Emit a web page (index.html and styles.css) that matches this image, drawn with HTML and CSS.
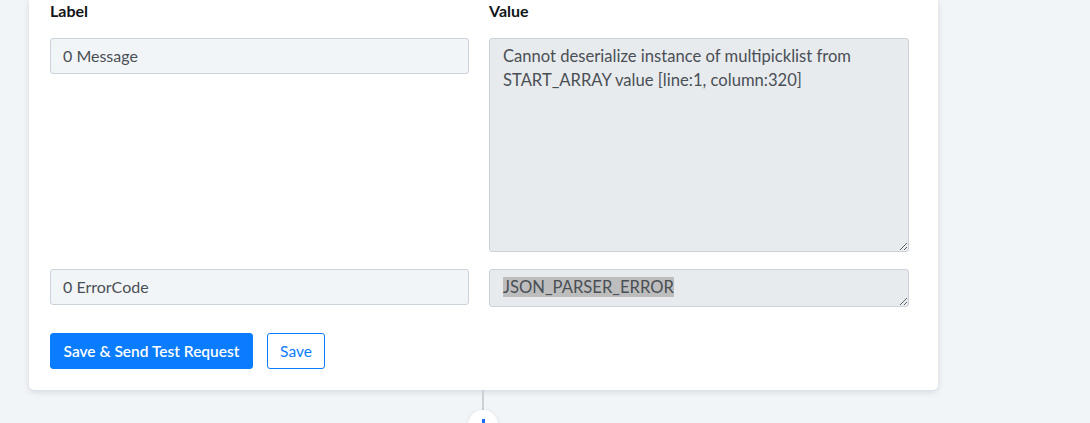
FILE: index.html
```html
<!DOCTYPE html>
<html>
  <head>
    <title>Test Request</title>
    <link rel="stylesheet" href="styles.css">
  </head>
  <body>
    <div class="page">
      <!-- tarjeta con los campos de la respuesta -->
      <div class="card">
        <div class="grid">
          <div class="head">Label</div>
          <div class="head">Value</div>

          <div class="field">0 Message</div>
          <div class="area tall">Cannot deserialize instance of multipicklist from START_ARRAY value [line:1, column:320]</div>

          <div class="field">0 ErrorCode</div>
          <div class="area short"><span class="picked">JSON_PARSER_ERROR</span></div>
        </div>
        <div class="actions">
          <button class="btn primary">Save &amp; Send Test Request</button>
          <button class="btn outline">Save</button>
        </div>
      </div>
      <!-- conector hacia el siguiente paso -->
      <div class="connector">
        <div class="line"></div>
        <div class="node"><span class="tick"></span></div>
      </div>
    </div>
  </body>
</html>
```

FILE: styles.css
```css
body {
  margin: 0;
  background-color: #f2f5f8;
  font-family: Lato, "Open Sans", sans-serif;
  color: #4a4f55;
  overflow: hidden;
}

.page {
  width: 909px;
  margin-left: 29px;
}

.card {
  background-color: #ffffff;
  border-radius: 0 0 5px 5px;
  box-shadow: 0 2px 6px rgba(30, 40, 60, 0.14);
  padding: 0 29px 20px 21px;
  box-sizing: border-box;
  height: 390px;
}

.grid {
  display: grid;
  grid-template-columns: 419px 420px;
  column-gap: 20px;
  row-gap: 17px;
}

.head {
  font-size: 16px;
  font-weight: 700;
  color: #111418;
  line-height: 20px;
  padding-top: 1px;
}

.field {
  height: 36px;
  box-sizing: border-box;
  border: 1px solid #cdd3da;
  border-radius: 3px;
  background-color: #f2f5f8;
  padding: 0 12px;
  font-size: 16px;
  line-height: 34px;
}

.area {
  box-sizing: border-box;
  border: 1px solid #cdd2d8;
  border-radius: 3px;
  background-color: #e8ebee;
  padding: 5px 13px;
  font-size: 16.6px;
  line-height: 24px;
  resize: vertical;
  overflow: hidden;
}

.tall {
  height: 214px;
}

.short {
  height: 38px;
}

.picked {
  background-color: #bdbdbd;
}

.actions {
  display: flex;
  gap: 14px;
  margin-top: 26px;
}

.btn {
  height: 36px;
  box-sizing: border-box;
  border-radius: 3px;
  font-family: Lato, sans-serif;
  font-size: 15.5px;
  font-weight: 600;
  padding: 0 10px;
  cursor: pointer;
}

.primary {
  background-color: #0a7cff;
  border: 1px solid #0a7cff;
  color: #ffffff;
  width: 203px;
}

.outline {
  background-color: #ffffff;
  border: 1px solid #0a7cff;
  color: #0a7cff;
  font-weight: 400;
  width: 58px;
}

.connector {
  display: flex;
  flex-direction: column;
  align-items: center;
  width: 908px;
}

.line {
  width: 2px;
  height: 22px;
  background-color: #cdd1d7;
}

.node {
  width: 30px;
  height: 30px;
  margin-top: -2px;
  border-radius: 50%;
  background-color: #ffffff;
  box-shadow: 0 1px 4px rgba(30, 40, 60, 0.12);
  display: flex;
  justify-content: center;
}

.tick {
  width: 3px;
  height: 10px;
  margin-top: 9px;
  background-color: #1a6cff;
}
```
